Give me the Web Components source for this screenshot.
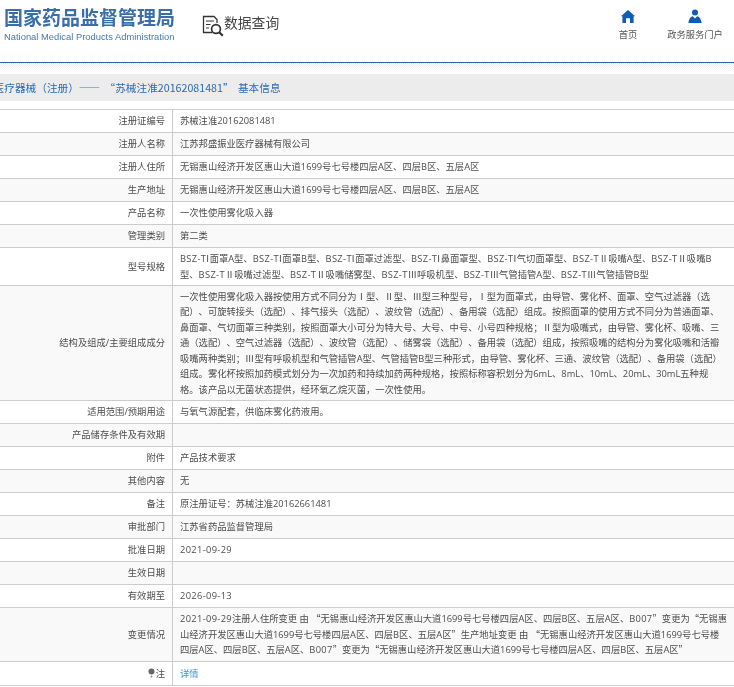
<!DOCTYPE html>
<html lang="zh">
<head>
<meta charset="utf-8">
<title>医疗器械基本信息</title>
<style>
  html, body { margin: 0; padding: 0; background: #fff; overflow: hidden; }
  body { font-family: "Open Sans", "Noto Sans CJK SC", sans-serif; color: #4d4d4d; height: 687px; text-spacing-trim: space-all; filter: blur(.3px); }
  i.q { font: normal 1em "Noto Sans CJK SC", sans-serif; }
  i.n { font: normal 1em "DejaVu Sans", sans-serif; letter-spacing: .6px; }
  i.m { font-style: normal; letter-spacing: .35px; }
</style>
</head>
<body>
<template id="site-header-tpl">
  <style>
    :host { display: flex; height: 62px; border-bottom: 1px solid #2a62a5; align-items: flex-start; }
    .logo { margin: 6px 0 0 4px; width: 172px; }
    .logo b { display: block; font: 700 19px/22px "Noto Sans CJK SC", sans-serif; color: #3a6ea8; white-space: nowrap; }
    .logo span { display: block; font: 9.4px/12px "Liberation Sans", sans-serif; color: #4a78ab; margin-top: 3px; white-space: nowrap; }
    .search { display: flex; align-items: flex-start; margin: 10px 0 0 26px; gap: 0; font: 13.8px/24px "Noto Sans CJK SC", sans-serif; color: #444; }
    .search svg { margin-top: 5px; }
    nav { margin-left: auto; display: flex; padding-top: 9px; }
  </style>
  <div class="logo"><b>国家药品监督管理局</b><span>National Medical Products Administration</span></div>
  <div class="search">
    <svg width="22" height="22" viewBox="0 0 22 22" fill="none" stroke="#333" stroke-width="1.3">
      <path d="M10 17.5H1.5V1.5H12L15 4.5V8"/>
      <path d="M4 6h8M4 9.5h4.5M4 13h3" stroke-width="1.2"/>
      <circle cx="14" cy="14" r="4.4" stroke-width="1.7"/>
      <path d="M17.2 17.2l3.6 3.6" stroke-width="2.2"/>
    </svg>
    <span>数据查询</span>
  </div>
  <nav><slot></slot></nav>
</template>

<template id="nav-link-tpl">
  <style>
    :host { display: flex; flex-direction: column; align-items: center; width: var(--w, 50px); }
    .ico { height: 14px; display: flex; align-items: center; }
    .lbl { font: 9.28px/14px "Noto Sans CJK SC", sans-serif; color: #555; margin-top: 4px; white-space: nowrap; }
  </style>
  <div class="ico"><slot name="icon"></slot></div>
  <div class="lbl"><slot></slot></div>
</template>

<template id="title-bar-tpl">
  <style>
    :host { display: block; overflow: hidden; }
    .band { height: 11px; background:
      linear-gradient(#fff0, #fff),
      repeating-conic-gradient(#e6e6e6 0 25%, #fff 0 50%) 0 0 / 2px 2px; }
    .bar { height: 27px; background: #ececec; font: 10.67px/27px "Noto Sans CJK SC", sans-serif; color: #2a6ab0; white-space: nowrap; text-indent: -6.4px; word-spacing: 2px; }
  </style>
  <div class="band"></div>
  <div class="bar"><slot></slot></div>
</template>

<template id="info-table-tpl">
  <style>
    :host { display: block; margin-top: 8px; border-top: 1px solid #ccc; }
  </style>
  <slot></slot>
</template>

<template id="info-row-tpl">
  <style>
    :host { display: grid; grid-template-columns: 173px 1fr; box-sizing: border-box; height: var(--h, 23px); border-bottom: 1px solid #ccc; font-size: 9.3px; line-height: 15.4px; }
    :host(:nth-child(even)) { background: #f9f9f9; }
    .k { display: flex; align-items: center; justify-content: flex-end; padding-right: 7px; border-right: 1px solid #ccc; white-space: nowrap; }
    .v { display: flex; align-items: center; padding-left: 7px; white-space: nowrap; overflow: hidden; }
    ::slotted(a) { color: #3f8fdc; text-decoration: none; }
  </style>
  <div class="k"><slot name="label"></slot></div>
  <div class="v"><div><slot></slot></div></div>
</template>

<site-header>
  <nav-link style="--w:56px"><svg slot="icon" width="14" height="13" viewBox="0 0 14 13"><path fill="#0f5cb5" d="M7 0L14 6.2 12.6 6.2V13H9V8.2H5V13H1.4V6.2H0Z"/></svg>首页</nav-link>
  <nav-link style="--w:78px"><svg slot="icon" width="14" height="14" viewBox="0 0 14 14"><circle cx="7" cy="3.4" r="3" fill="#0f5cb5"/><path fill="#0f5cb5" d="M0.4 14C1 9.6 2.4 8 4.8 7.2L7 9.4 9.2 7.2C11.6 8 13 9.6 13.6 14Z"/></svg>政务服务门户</nav-link>
</site-header>
<title-bar>医疗器械（注册）—— “苏械注准20162081481” 基本信息</title-bar>
<info-table>
  <info-row><span slot="label">注册证编号</span>苏械注准20162081481</info-row>
  <info-row><span slot="label">注册人名称</span>江苏邦盛振业医疗器械有限公司</info-row>
  <info-row><span slot="label">注册人住所</span>无锡惠山经济开发区惠山大道1699号七号楼四层A区、四层B区、五层A区</info-row>
  <info-row><span slot="label">生产地址</span>无锡惠山经济开发区惠山大道1699号七号楼四层A区、四层B区、五层A区</info-row>
  <info-row><span slot="label">产品名称</span>一次性使用雾化吸入器</info-row>
  <info-row><span slot="label">管理类别</span>第二类</info-row>
  <info-row style="--h:38px"><span slot="label">型号规格</span><i class="m">BSZ-T</i><i class="n">Ⅰ</i>面罩A型、<i class="m">BSZ-T</i><i class="n">Ⅰ</i>面罩B型、<i class="m">BSZ-T</i><i class="n">Ⅰ</i>面罩过滤型、<i class="m">BSZ-T</i><i class="n">Ⅰ</i>鼻面罩型、<i class="m">BSZ-T</i><i class="n">Ⅰ</i>气切面罩型、<i class="m">BSZ-T</i>Ⅱ吸嘴A型、<i class="m">BSZ-T</i>Ⅱ吸嘴B<br>型、<i class="m">BSZ-T</i>Ⅱ吸嘴过滤型、<i class="m">BSZ-T</i>Ⅱ吸嘴储雾型、<i class="m">BSZ-T</i>Ⅲ呼吸机型、<i class="m">BSZ-T</i>Ⅲ气管插管A型、<i class="m">BSZ-T</i>Ⅲ气管插管B型</info-row>
  <info-row style="--h:115px"><span slot="label">结构及组成/主要组成成分</span>一次性使用雾化吸入器按使用方式不同分为Ⅰ型、Ⅱ型、Ⅲ型三种型号，Ⅰ型为面罩式，由导管、雾化杯、面罩、空气过滤器（选<br>配）、可旋转接头（选配）、排气接头（选配）、波纹管（选配）、备用袋（选配）组成。按照面罩的使用方式不同分为普通面罩、<br>鼻面罩、气切面罩三种类别，按照面罩大小可分为特大号、大号、中号、小号四种规格；Ⅱ型为吸嘴式，由导管、雾化杯、吸嘴、三<br>通（选配）、空气过滤器（选配）、波纹管（选配）、储雾袋（选配）、备用袋（选配）组成，按照吸嘴的结构分为雾化吸嘴和活瓣<br>吸嘴两种类别；Ⅲ型有呼吸机型和气管插管A型、气管插管B型三种形式，由导管、雾化杯、三通、波纹管（选配）、备用袋（选配）<br>组成。雾化杯按照加药模式划分为一次加药和持续加药两种规格，按照标称容积划分为6mL、8mL、10mL、20mL、30mL五种规<br>格。该产品以无菌状态提供，经环氧乙烷灭菌，一次性使用。</info-row>
  <info-row><span slot="label">适用范围/预期用途</span>与氧气源配套，供临床雾化药液用。</info-row>
  <info-row><span slot="label">产品储存条件及有效期</span></info-row>
  <info-row><span slot="label">附件</span>产品技术要求</info-row>
  <info-row><span slot="label">其他内容</span>无</info-row>
  <info-row><span slot="label">备注</span>原注册证号：苏械注准20162661481</info-row>
  <info-row><span slot="label">审批部门</span>江苏省药品监督管理局</info-row>
  <info-row><span slot="label">批准日期</span><i class="m">2021-09-29</i></info-row>
  <info-row><span slot="label">生效日期</span></info-row>
  <info-row><span slot="label">有效期至</span><i class="m">2026-09-13</i></info-row>
  <info-row style="--h:54px"><span slot="label">变更情况</span><i class="m">2021-09-29</i>注册人住所变更 由 <i class="q">“</i>无锡惠山经济开发区惠山大道1699号七号楼四层A区、四层B区、五层A区、<i class="m">B007</i><i class="q">”</i>变更为<i class="q">“</i>无锡惠<br>山经济开发区惠山大道1699号七号楼四层A区、四层B区、五层A区<i class="q">”</i>生产地址变更 由 <i class="q">“</i>无锡惠山经济开发区惠山大道1699号七号楼<br>四层A区、四层B区、五层A区、<i class="m">B007</i><i class="q">”</i>变更为<i class="q">“</i>无锡惠山经济开发区惠山大道1699号七号楼四层A区、四层B区、五层A区<i class="q">”</i></info-row>
  <info-row style="--h:24px"><span slot="label"><svg width="7" height="10" viewBox="0 0 7 10" style="margin-right:1px;vertical-align:-1px"><circle cx="3.5" cy="3.5" r="3" fill="#666"/><circle cx="3.5" cy="8.6" r="1" fill="#888"/></svg>注</span><a href="#">详情</a></info-row>
</info-table>
<script>
function define(name, tplId) {
  const tpl = document.getElementById(tplId);
  customElements.define(name, class extends HTMLElement {
    constructor() {
      super();
      this.attachShadow({ mode: "open" }).appendChild(tpl.content.cloneNode(true));
    }
  });
}
define("site-header", "site-header-tpl");
define("nav-link", "nav-link-tpl");
define("title-bar", "title-bar-tpl");
define("info-table", "info-table-tpl");
define("info-row", "info-row-tpl");
</script>
</body>
</html>
